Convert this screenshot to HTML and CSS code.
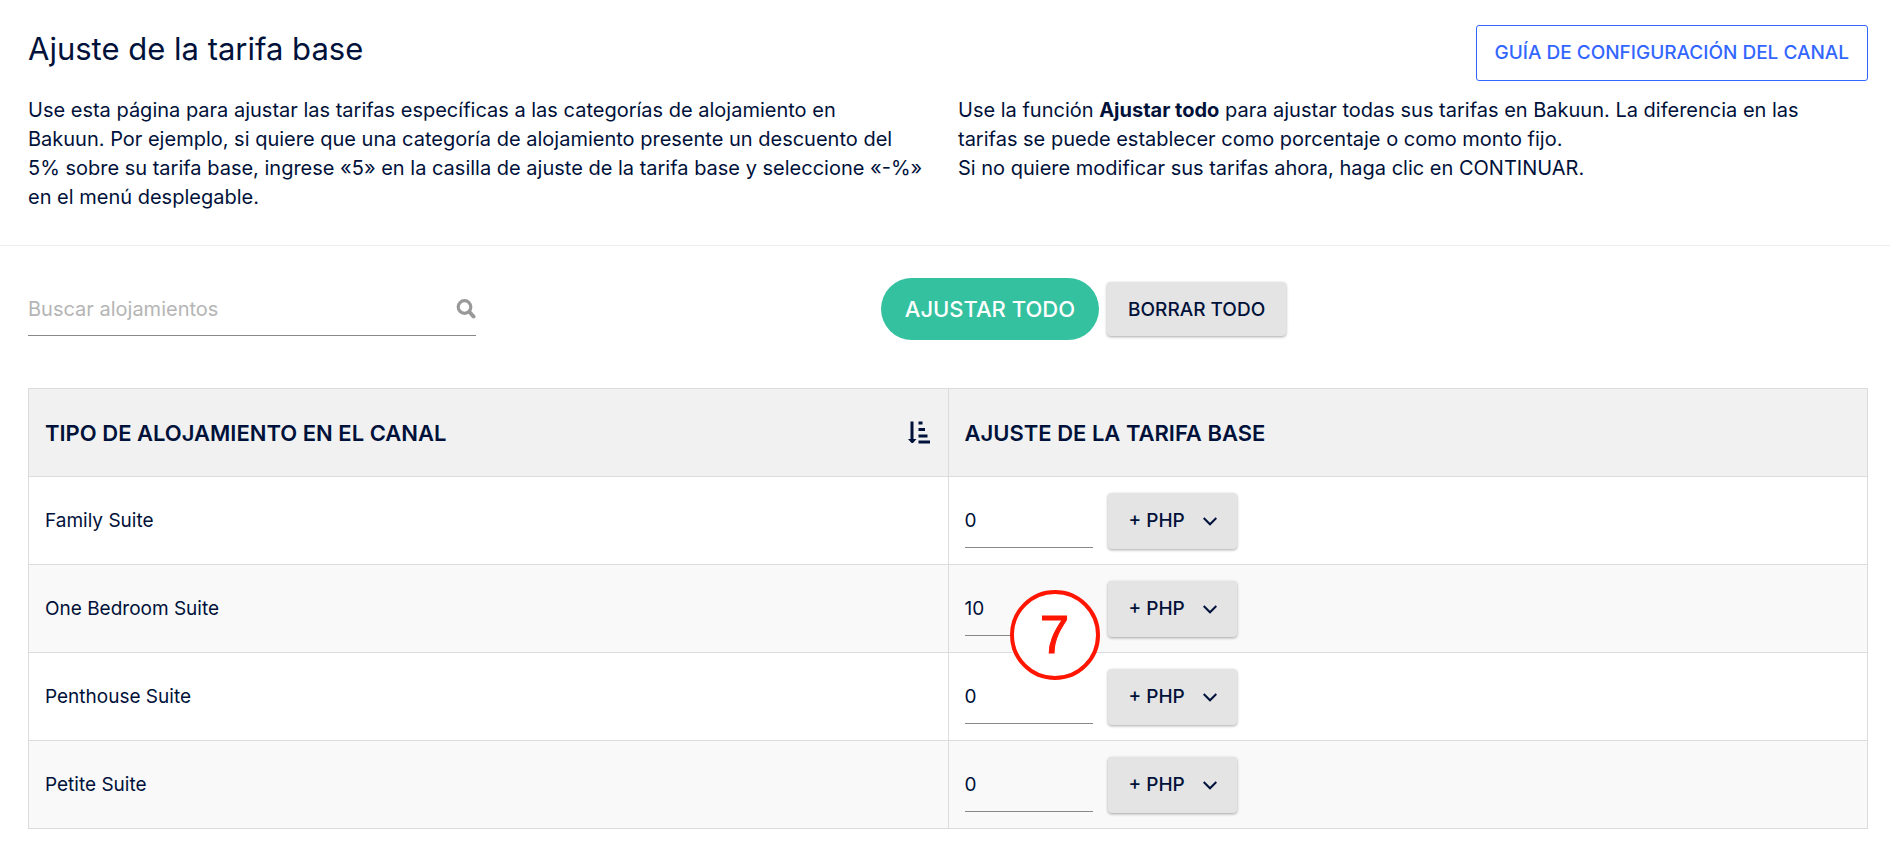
FILE: index.html
```html
<!DOCTYPE html>
<html lang="es">
<head>
    <meta charset="UTF-8">
    <meta name="viewport" content="width=device-width, initial-scale=1.0">
    <title>Ajuste de la tarifa base</title>
    <link rel="stylesheet" href="styles.css">
</head>
<body>
    <header class="page-header">
        <div class="title-row">
            <h1>Ajuste de la tarifa base</h1>
            <a href="#" class="guide-link">GUÍA DE CONFIGURACIÓN DEL CANAL</a>
        </div>
        <div class="intro">
            <p>Use esta página para ajustar las tarifas específicas a las categorías de alojamiento en<br>
            Bakuun. Por ejemplo, si quiere que una categoría de alojamiento presente un descuento del<br>
            5% sobre su tarifa base, ingrese «5» en la casilla de ajuste de la tarifa base y seleccione «-%»<br>
            en el menú desplegable.</p>
            <p>Use la función <strong>Ajustar todo</strong> para ajustar todas sus tarifas en Bakuun. La diferencia en las<br>
            tarifas se puede establecer como porcentaje o como monto fijo.<br>
            Si no quiere modificar sus tarifas ahora, haga clic en CONTINUAR.</p>
        </div>
    </header>

    <main class="content">
        <div class="toolbar">
            <div class="search">
                <input type="text" id="search" placeholder="Buscar alojamientos" aria-label="Buscar alojamientos">
                <svg class="search-icon" viewBox="0 0 20 20" aria-hidden="true">
                    <circle cx="8.5" cy="8" r="6.3" fill="none" stroke="#999" stroke-width="3.2"/>
                    <path d="M13.5 13L17.5 17.5" stroke="#999" stroke-width="4" stroke-linecap="round"/>
                </svg>
            </div>
            <div class="actions">
                <button type="button" class="btn-primary">AJUSTAR TODO</button>
                <button type="button" class="btn-secondary">BORRAR TODO</button>
            </div>
        </div>

        <table class="rates">
            <thead>
                <tr>
                    <th>
                        <div class="th-inner">
                            <span>TIPO DE ALOJAMIENTO EN EL CANAL</span>
                            <svg class="sort-icon" viewBox="0 0 22 23" aria-hidden="true">
                                <path d="M2.5 0.5H5.5V18H8.5L5 22H3.5L0 18H2.5Z"/>
                                <path d="M10.5 0.5H14.5V3.5H10.5ZM10.5 7H17V10H10.5ZM10.5 13.5H19.5V16.5H10.5ZM10.5 19.5H22V22.5H10.5Z"/>
                            </svg>
                        </div>
                    </th>
                    <th>AJUSTE DE LA TARIFA BASE</th>
                </tr>
            </thead>
            <tbody>
                <tr>
                    <td>Family Suite</td>
                    <td>
                        <div class="adjust">
                            <input type="text" value="0" aria-label="Ajuste Family Suite">
                            <div class="select-wrap">
                                <select aria-label="Tipo de ajuste Family Suite">
                                    <option>+ PHP</option>
                                    <option>- PHP</option>
                                    <option>+%</option>
                                    <option>-%</option>
                                </select>
                                <svg class="chevron" viewBox="0 0 14 9" aria-hidden="true"><path d="M0.7 1L7 7.3L13.3 1"/></svg>
                            </div>
                        </div>
                    </td>
                </tr>
                <tr>
                    <td>One Bedroom Suite</td>
                    <td>
                        <div class="adjust">
                            <input type="text" value="10" aria-label="Ajuste One Bedroom Suite">
                            <div class="select-wrap">
                                <select aria-label="Tipo de ajuste One Bedroom Suite">
                                    <option>+ PHP</option>
                                    <option>- PHP</option>
                                    <option>+%</option>
                                    <option>-%</option>
                                </select>
                                <svg class="chevron" viewBox="0 0 14 9" aria-hidden="true"><path d="M0.7 1L7 7.3L13.3 1"/></svg>
                            </div>
                            <span class="step-badge">7</span>
                        </div>
                    </td>
                </tr>
                <tr>
                    <td>Penthouse Suite</td>
                    <td>
                        <div class="adjust">
                            <input type="text" value="0" aria-label="Ajuste Penthouse Suite">
                            <div class="select-wrap">
                                <select aria-label="Tipo de ajuste Penthouse Suite">
                                    <option>+ PHP</option>
                                    <option>- PHP</option>
                                    <option>+%</option>
                                    <option>-%</option>
                                </select>
                                <svg class="chevron" viewBox="0 0 14 9" aria-hidden="true"><path d="M0.7 1L7 7.3L13.3 1"/></svg>
                            </div>
                        </div>
                    </td>
                </tr>
                <tr>
                    <td>Petite Suite</td>
                    <td>
                        <div class="adjust">
                            <input type="text" value="0" aria-label="Ajuste Petite Suite">
                            <div class="select-wrap">
                                <select aria-label="Tipo de ajuste Petite Suite">
                                    <option>+ PHP</option>
                                    <option>- PHP</option>
                                    <option>+%</option>
                                    <option>-%</option>
                                </select>
                                <svg class="chevron" viewBox="0 0 14 9" aria-hidden="true"><path d="M0.7 1L7 7.3L13.3 1"/></svg>
                            </div>
                        </div>
                    </td>
                </tr>
            </tbody>
        </table>
    </main>
</body>
</html>
```

FILE: styles.css
```css
* {
    box-sizing: border-box;
}

body {
    margin: 0;
    background: #fff;
    color: #00113a;
    font-family: Inter, "Open Sans", sans-serif;
    font-size: 19px;
}

.page-header {
    padding: 25px 22px 33px 28px;
    border-bottom: 1px solid #ececec;
}

.title-row {
    display: flex;
    justify-content: space-between;
    align-items: flex-start;
    margin-bottom: 15px;
}

h1 {
    margin: 0;
    font-size: 31px;
    font-weight: 400;
    line-height: 48px;
}

.guide-link {
    padding: 0 18px;
    border: 1px solid #3366ff;
    border-radius: 3px;
    color: #3366ff;
    font-size: 19px;
    font-weight: 500;
    line-height: 54px;
    text-decoration: none;
}

.intro {
    display: grid;
    grid-template-columns: 1fr 1fr;
    gap: 20px;
}

.intro p {
    margin: 0;
    font-size: 20px;
    line-height: 29px;
}

.intro strong {
    font-weight: 700;
}

.content {
    padding: 32px 22px 16px 28px;
}

.toolbar {
    display: flex;
    align-items: center;
    margin-bottom: 48px;
}

.search {
    display: flex;
    align-items: center;
    width: 448px;
    height: 54px;
    border-bottom: 1px solid #888;
}

.search input {
    flex: 1;
    min-width: 0;
    padding: 0;
    border: none;
    outline: none;
    background: none;
    color: #00113a;
    font-family: inherit;
    font-size: 20px;
}

.search input::placeholder {
    color: #b5b5b5;
}

.search-icon {
    width: 20px;
    height: 20px;
}

.actions {
    display: flex;
    align-items: center;
    gap: 8px;
    margin-left: 22%;
}

button {
    border: none;
    font-family: inherit;
    font-weight: 500;
    cursor: pointer;
}

.btn-primary {
    height: 62px;
    padding: 0 24px;
    border-radius: 31px;
    background: #34c1a0;
    color: #fff;
    font-size: 22px;
}

.btn-secondary {
    height: 54px;
    padding: 0 21px;
    border-radius: 4px;
    background: #e4e4e4;
    color: #00113a;
    font-size: 19px;
    box-shadow: 0 1px 3px rgba(0, 0, 0, 0.35);
}

.rates {
    width: 100%;
    table-layout: fixed;
    border-collapse: collapse;
}

.rates th,
.rates td {
    height: 88px;
    padding: 0 18px 0 16px;
    border: 1px solid #dcdcdc;
    text-align: left;
}

.rates th {
    background: #f1f1f1;
    font-size: 22px;
    font-weight: 600;
}

.rates tbody tr:nth-child(even) {
    background: #f9f9f9;
}

.th-inner {
    display: flex;
    align-items: center;
    justify-content: space-between;
}

.sort-icon {
    width: 22px;
    height: 23px;
    fill: #00113a;
}

.adjust {
    position: relative;
    display: flex;
    align-items: center;
    gap: 15px;
}

.adjust input {
    width: 128px;
    height: 54px;
    padding: 0;
    border: none;
    border-bottom: 1px solid #888;
    border-radius: 0;
    outline: none;
    background: none;
    color: #00113a;
    font-family: inherit;
    font-size: 19px;
}

.select-wrap {
    position: relative;
}

.adjust select {
    width: 129px;
    height: 56px;
    padding: 0 21px;
    appearance: none;
    border: none;
    border-radius: 4px;
    background: #e4e4e4;
    color: #00113a;
    font-family: inherit;
    font-size: 19px;
    font-weight: 500;
    box-shadow: 0 1px 3px rgba(0, 0, 0, 0.35);
}

.chevron {
    position: absolute;
    top: 24px;
    right: 20px;
    width: 14px;
    height: 9px;
    fill: none;
    stroke: #00113a;
    stroke-width: 2;
    pointer-events: none;
}

/* numbered marker lying over the rows */
.step-badge {
    position: absolute;
    top: 9px;
    left: 45px;
    z-index: 1;
    display: flex;
    align-items: center;
    justify-content: center;
    width: 90px;
    height: 90px;
    border: 4px solid #ff1500;
    border-radius: 50%;
    background: #fff;
    color: #ff1500;
    font-family: "Liberation Sans", Arial, sans-serif;
    font-size: 53px;
    -webkit-text-stroke: 1px #ff1500;
}
```
